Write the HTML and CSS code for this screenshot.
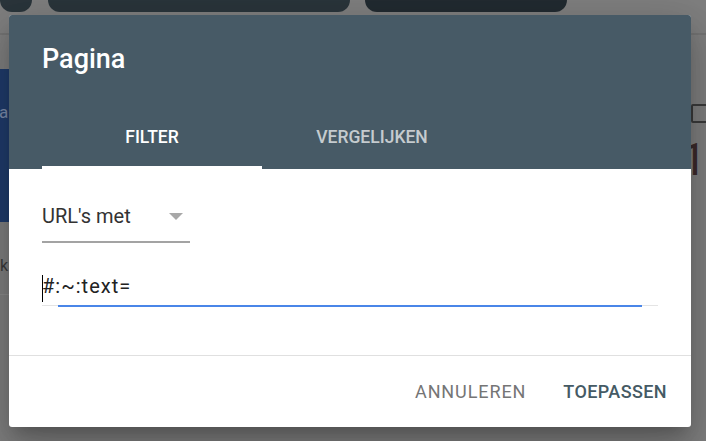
FILE: index.html
```html
<!DOCTYPE html>
<html lang="nl">
<head>
    <meta charset="UTF-8">
    <meta name="viewport" content="width=device-width, initial-scale=1.0">
    <title>Pagina filter</title>
    <link rel="stylesheet" href="styles.css">
</head>
<body>
    <div class="page">
        <div class="topbar">
            <div class="pill pill-a"></div>
            <div class="pill pill-b"></div>
            <div class="pill pill-c"></div>
        </div>
        <div class="page-body">
            <div class="side-left">
                <div class="side-card">a</div>
                <div class="side-text">k</div>
            </div>
            <div class="side-main"></div>
            <div class="side-right">
                <span class="chk"></span>
                <span class="big-num">1</span>
            </div>
        </div>
        <div class="page-foot"></div>
    </div>

    <div class="dialog">
        <div class="dialog-header">
            <h2 class="dialog-title">Pagina</h2>
            <div class="tabs">
                <div class="tab active">FILTER</div>
                <div class="tab">VERGELIJKEN</div>
            </div>
        </div>
        <div class="dialog-body">
            <div class="select">
                <span class="select-value">URL's met</span>
                <span class="select-arrow"></span>
            </div>
            <div class="field">
                <span class="caret"></span>
                <span class="field-value">#:~:text=</span>
            </div>
        </div>
        <div class="dialog-actions">
            <button class="btn btn-cancel">ANNULEREN</button>
            <button class="btn btn-apply">TOEPASSEN</button>
        </div>
    </div>
</body>
</html>
```

FILE: styles.css
```css
body {
    font-family: Roboto, "Liberation Sans", Arial, sans-serif;
    margin: 0;
    padding: 0;
    background-color: #7f7f7f;
    overflow: hidden;
}
.page {
    height: 441px;
    display: flex;
    flex-direction: column;
}
.topbar {
    height: 33px;
    display: flex;
    align-items: flex-start;
    border-bottom: 2px solid #747474;
}
.pill {
    height: 12px;
    border-radius: 0 0 13px 13px;
}
.pill-a {
    width: 32px;
    background-color: #2a353b;
}
.pill-b {
    width: 302px;
    margin-left: 16px;
    background-color: #2a353b;
}
.pill-c {
    width: 202px;
    margin-left: 15px;
    background-color: #222b31;
}
.page-body {
    flex: 1;
    display: flex;
}
.side-left {
    width: 9px;
    overflow: hidden;
}
.side-card {
    margin-top: 34px;
    height: 153px;
    background-color: #203c6c;
    color: #7d8cab;
    font-size: 17px;
    line-height: 20px;
    padding-top: 33px;
    box-sizing: border-box;
    text-indent: -1px;
}
.side-text {
    margin-top: 34px;
    padding-bottom: 18px;
    border-bottom: 1px solid #8a8a8a;
    color: #3a3a3a;
    font-size: 16px;
    line-height: 20px;
}
.side-main {
    flex: 1;
}
.side-right {
    width: 15px;
    display: flex;
    flex-direction: column;
    align-items: flex-start;
    padding-top: 69px;
    box-sizing: border-box;
}
.chk {
    width: 14px;
    height: 15px;
    border: 2px solid #3b3b3b;
    border-radius: 2px;
}
.big-num {
    margin-top: 13px;
    margin-left: -10px;
    font-size: 45px;
    line-height: 48px;
    color: #3b2a2a;
}
.page-foot {
    height: 13px;
}

.dialog {
    position: absolute;
    left: 9px;
    top: 15px;
    width: 682px;
    background-color: #fff;
    border-radius: 3px;
    overflow: hidden;
    box-shadow: 0 11px 15px -7px rgba(0, 0, 0, 0.2),
                0 24px 38px 3px rgba(0, 0, 0, 0.14),
                0 9px 46px 8px rgba(0, 0, 0, 0.12);
}
.dialog-header {
    height: 154px;
    background-color: #475a66;
    display: flex;
    flex-direction: column;
}
.dialog-title {
    margin: 0;
    padding: 28px 33px 0;
    color: #fff;
    font-size: 27px;
    font-weight: 500;
    line-height: 32px;
}
.tabs {
    margin-top: auto;
    padding: 0 33px;
    display: flex;
}
.tab {
    width: 220px;
    text-align: center;
    padding: 10px 0 19px;
    font-size: 17.5px;
    font-weight: 500;
    line-height: 20px;
    color: rgba(255, 255, 255, 0.7);
    border-bottom: 3px solid transparent;
}
.tab.active {
    color: #fff;
    border-bottom-color: #fff;
}
.dialog-body {
    padding: 35px 33px 0;
    height: 187px;
    box-sizing: border-box;
    border-bottom: 1px solid #e0e0e0;
}
.select {
    width: 148px;
    display: flex;
    align-items: center;
    justify-content: space-between;
    padding-bottom: 13px;
    border-bottom: 2px solid #a3a3a3;
}
.select-value {
    font-size: 20px;
    line-height: 24px;
    color: #333;
}
.select-arrow {
    width: 0;
    height: 0;
    margin-right: 7px;
    border-left: 7.5px solid transparent;
    border-right: 7.5px solid transparent;
    border-top: 7px solid #a8a8a8;
}
.field {
    position: relative;
    width: 616px;
    margin-top: 31px;
    padding-bottom: 7px;
    border-bottom: 1px solid #e4e4e4;
}
.field::after {
    content: "";
    position: absolute;
    left: 16px;
    right: 16px;
    bottom: -2px;
    height: 2px;
    background-color: #4a86e8;
}
.field-value {
    display: block;
    font-size: 20px;
    line-height: 24px;
    letter-spacing: 1px;
    color: #222;
}
.caret {
    position: absolute;
    left: 0;
    top: 1px;
    width: 1px;
    height: 27px;
    background-color: #000;
}
.dialog-actions {
    height: 71px;
    display: flex;
    align-items: center;
    justify-content: flex-end;
    padding-right: 16px;
    gap: 21px;
}
.btn {
    background: none;
    border: none;
    padding: 0 8px;
    font-family: inherit;
    font-size: 18px;
    line-height: 24px;
}
.btn-cancel {
    color: #757575;
    font-weight: 400;
    letter-spacing: 0.9px;
}
.btn-apply {
    color: #455a64;
    font-weight: 500;
    letter-spacing: 0.4px;
}
```
